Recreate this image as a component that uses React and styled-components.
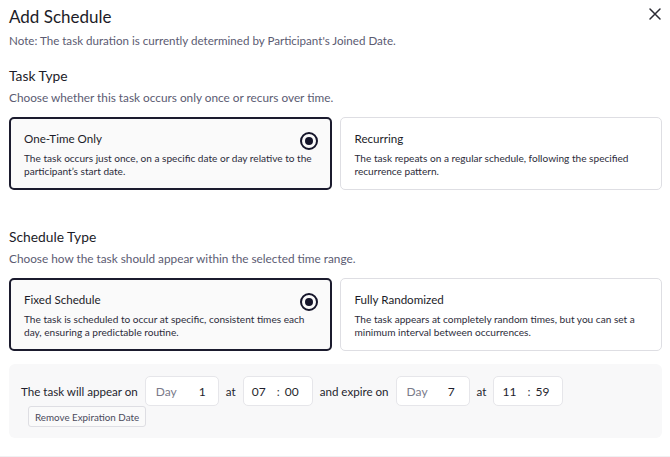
import React from 'react'
import styled, { createGlobalStyle } from 'styled-components'

const GlobalStyle = createGlobalStyle`
  body {
    margin: 0;
    background: #ffffff;
    font-family: Lato, "Noto Sans", sans-serif;
    color: #1f1f2e;
  }
`

const Page = styled.div`
  width: 670px;
  height: 457px;
  box-sizing: border-box;
  padding: 6px 8px 0 9px;
  overflow: hidden;
  border-bottom: 1px solid #f0f0f2;
`

const Header = styled.div`
  display: flex;
  align-items: center;
  justify-content: space-between;
`

const Title = styled.h1`
  margin: 0;
  font-size: 17px;
  line-height: 22px;
  font-weight: 400;
  color: #1c1c28;
`

const CloseButton = styled.button`
  border: none;
  background: none;
  padding: 0;
  margin: -6px 0 0 0;
  display: flex;
  color: #2a2a33;
  cursor: pointer;
`

const Note = styled.p`
  margin: 5px 0 0;
  font-size: 11.6px;
  line-height: 16px;
  color: #5b5b72;
`

const Section = styled.section`
  margin-top: ${p => p.top}px;
`

const SectionTitle = styled.h2`
  margin: 0;
  font-size: 13.8px;
  line-height: 18px;
  font-weight: 400;
  color: #1c1c28;
`

const SectionHint = styled.p`
  margin: 5px 0 0;
  font-size: 11.8px;
  line-height: 16px;
  color: #5b5b72;
`

const Options = styled.div`
  margin-top: 11px;
  display: grid;
  grid-template-columns: 1fr 1fr;
  gap: 8px;
`

const Option = styled.div`
  position: relative;
  box-sizing: border-box;
  height: 73px;
  border-radius: 5px;
  border: ${p => (p.selected ? '2px solid #1b1b2e' : '1px solid #dedee3')};
  padding: ${p => (p.selected ? '12px 13px' : '13px 14px')};
  background: ${p => (p.selected ? '#fafafa' : '#ffffff')};
`

const OptionTitle = styled.div`
  font-size: 11.6px;
  line-height: 16px;
  color: #1c1c28;
`

const OptionText = styled.div`
  margin-top: 5px;
  font-size: 10.1px;
  line-height: 13px;
  color: #2c2c3a;
`

const Radio = styled.span`
  position: absolute;
  top: 13px;
  right: 12px;
  width: 14px;
  height: 14px;
  border: 2px solid #15152a;
  border-radius: 50%;
  display: flex;
  align-items: center;
  justify-content: center;

  &::after {
    content: '';
    width: 8px;
    height: 8px;
    border-radius: 50%;
    background: #15152a;
  }
`

const Panel = styled.div`
  margin-top: 13px;
  background: #f8f8f9;
  border-radius: 6px;
  padding: 12px;
  height: 74px;
  box-sizing: border-box;
`

const Row = styled.div`
  display: flex;
  align-items: center;
  gap: 7px;
  font-size: 11.6px;
  color: #1f1f2e;
`

const Field = styled.div`
  box-sizing: border-box;
  width: ${p => p.w}px;
  height: 30px;
  background: #ffffff;
  border: 1px solid #e6e6ea;
  border-radius: 5px;
  display: flex;
  align-items: center;
  padding: 0 ${p => p.pr || 13}px 0 ${p => p.pl || 10}px;
  font-size: 12px;
  color: #1f1f2e;
`

const Muted = styled.span`
  color: #7a7a8a;
  flex: 1;
`

const TimePart = styled.span`
  width: ${p => (p.w ? `${p.w}px` : 'auto')};
`

const Colon = styled.span`
  color: #3a3a48;
  margin-right: 5px;
`

const SmallButton = styled.button`
  margin: 0 0 0 7px;
  background: #fafafa;
  border: 1px solid #dedee3;
  border-radius: 3px;
  font-family: inherit;
  font-size: 9.8px;
  color: #4a4a5c;
  height: 21px;
  padding: 0 6px;
  display: block;
`

function DayField({ w, day, pr }) {
  return (
    <Field w={w} pr={pr}>
      <Muted>Day</Muted>
      <span>{day}</span>
    </Field>
  )
}

function TimeField({ w, h, m }) {
  return (
    <Field w={w} pl={8}>
      <TimePart w={27}>{h}</TimePart>
      <Colon>:</Colon>
      <TimePart>{m}</TimePart>
    </Field>
  )
}

export default function App() {
  return (
    <>
      <GlobalStyle />
      <Page>
        <Header>
          <Title>Add Schedule</Title>
          <CloseButton aria-label="Close">
            <svg width="14" height="14" viewBox="0 0 14 14" fill="none">
              <path d="M2 2L12 12M12 2L2 12" stroke="currentColor" strokeWidth="1.5" strokeLinecap="round" />
            </svg>
          </CloseButton>
        </Header>
        <Note>Note: The task duration is currently determined by Participant's Joined Date.</Note>

        <Section top={18}>
          <SectionTitle>Task Type</SectionTitle>
          <SectionHint>Choose whether this task occurs only once or recurs over time.</SectionHint>
          <Options>
            <Option selected>
              <OptionTitle>One-Time Only</OptionTitle>
              <OptionText>
                The task occurs just once, on a specific date or day relative to the participant’s start date.
              </OptionText>
              <Radio />
            </Option>
            <Option>
              <OptionTitle>Recurring</OptionTitle>
              <OptionText>
                The task repeats on a regular schedule, following the specified recurrence pattern.
              </OptionText>
            </Option>
          </Options>
        </Section>

        <Section top={38}>
          <SectionTitle>Schedule Type</SectionTitle>
          <SectionHint>Choose how the task should appear within the selected time range.</SectionHint>
          <Options>
            <Option selected>
              <OptionTitle>Fixed Schedule</OptionTitle>
              <OptionText>
                The task is scheduled to occur at specific, consistent times each day, ensuring a predictable routine.
              </OptionText>
              <Radio />
            </Option>
            <Option>
              <OptionTitle>Fully Randomized</OptionTitle>
              <OptionText>
                The task appears at completely random times, but you can set a minimum interval between occurrences.
              </OptionText>
            </Option>
          </Options>
        </Section>

        <Panel>
          <Row>
            <span>The task will appear on</span>
            <DayField w={74} day="1" pr={12} />
            <span>at</span>
            <TimeField w={70} h="07" m="00" />
            <span>and expire on</span>
            <DayField w={74} day="7" pr={14} />
            <span>at</span>
            <TimeField w={70} h="11" m="59" />
          </Row>
          <SmallButton>Remove Expiration Date</SmallButton>
        </Panel>
      </Page>
    </>
  )
}
